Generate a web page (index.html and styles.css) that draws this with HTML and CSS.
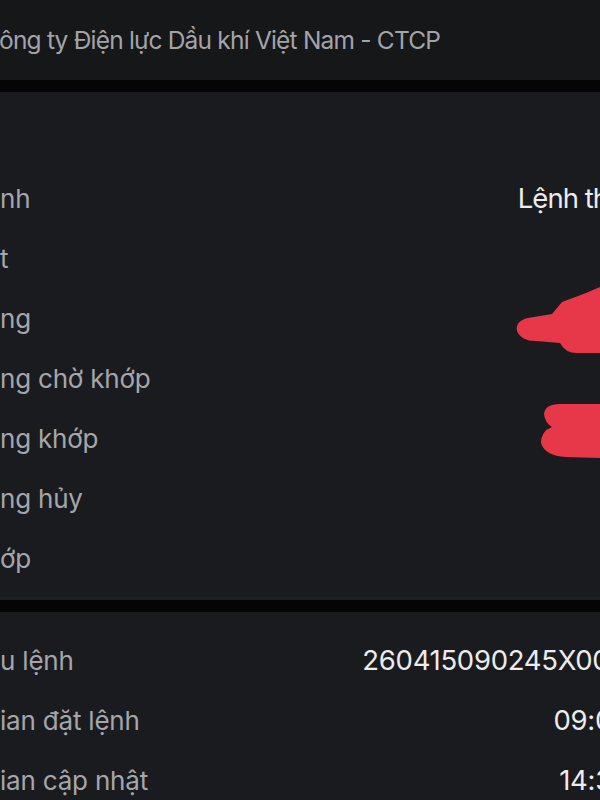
FILE: index.html
```html
<!DOCTYPE html>
<html lang="vi">
<head>
<meta charset="utf-8">
<link rel="stylesheet" href="styles.css">
</head>
<body>
<div class="screen">
  <header class="company">
    <span class="company-name">ông ty Điện lực Dầu khí Việt Nam - CTCP</span>
  </header>
  <div class="divider"></div>
  <section class="card card-main">
    <div class="row"><span class="label">nh</span><span class="value value-tight">Lệnh thường</span></div>
    <div class="row"><span class="label">t</span><span class="value"></span></div>
    <div class="row"><span class="label">ng</span><span class="value"></span></div>
    <div class="row"><span class="label">ng chờ khớp</span><span class="value"></span></div>
    <div class="row"><span class="label">ng khớp</span><span class="value"></span></div>
    <div class="row"><span class="label">ng hủy</span><span class="value"></span></div>
    <div class="row"><span class="label">ớp</span><span class="value"></span></div>
    <svg class="scribble" viewBox="0 0 600 800" width="600" height="800" aria-hidden="true">
      <path d="M600 287 L586 293 L562 302 L552 314 L528 318 Q515 321 517 331 Q521 341 536 341 L560 343 Q565 353 577 353 L600 353 Z" fill="#e63848"/>
      <path d="M600 404 L560 404 Q545 404 544 414 Q545 423 552 427 Q541 431 541 443 Q545 456 566 457 L600 458 Z" fill="#e63848"/>
    </svg>
  </section>
  <div class="divider"></div>
  <section class="card card-info">
    <div class="row"><span class="label">u lệnh</span><span class="value">260415090245X001395</span></div>
    <div class="row"><span class="label">ian đặt lệnh</span><span class="value">09:02:45</span></div>
    <div class="row"><span class="label">ian cập nhật</span><span class="value">14:30:05</span></div>
  </section>
</div>
</body>
</html>
```

FILE: styles.css
```css
html, body {
  margin: 0;
  padding: 0;
  background: #1a1b1e;
  overflow: hidden;
  width: 600px;
  height: 800px;
}

.screen {
  width: 600px;
  height: 800px;
  overflow: hidden;
  font-family: Inter, "Noto Sans", "Liberation Sans", sans-serif;
}

.company {
  height: 80px;
  background: #161719;
  display: flex;
  align-items: center;
}

.company-name {
  color: #a3a4a9;
  font-size: 24.5px;
  letter-spacing: -0.8px;
  white-space: nowrap;
  margin-left: -1px;
}

.divider {
  height: 12px;
  background: #050506;
}

.card {
  background: #1a1b1e;
  position: relative;
}

.card-main {
  height: 508px;
  padding-top: 76px;
  box-sizing: border-box;
  border-bottom: 3px solid #1e1f22;
}

.card-info {
  padding-top: 18px;
}

.row {
  width: 670px;
  height: 60px;
  display: flex;
  align-items: center;
  justify-content: space-between;
  white-space: nowrap;
}

.label {
  color: #a5a6ab;
  font-size: 26px;
  letter-spacing: -0.2px;
}

.value {
  color: #ececee;
  font-size: 27.5px;
  letter-spacing: -0.3px;
}

.value-tight {
  letter-spacing: -0.95px;
}

.scribble {
  position: absolute;
  left: 0;
  top: -92px;
  pointer-events: none;
}
```
